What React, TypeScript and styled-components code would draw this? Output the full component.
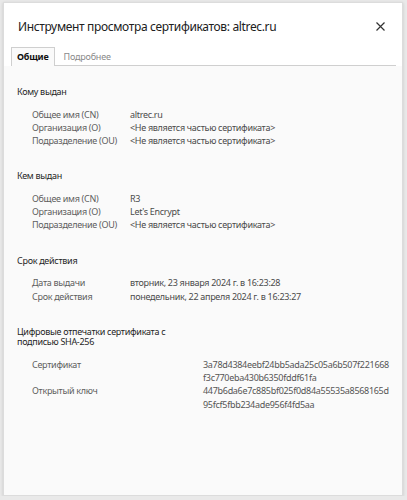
import React from 'react';
import styled, { createGlobalStyle } from 'styled-components';

const GlobalStyle = createGlobalStyle`
  html, body {
    margin: 0;
    padding: 0;
    background: #e9e9e9;
  }
  body {
    font-family: 'Noto Sans', 'Open Sans', sans-serif;
  }
`;

const St = {
  Dialog: styled.div`
    box-sizing: border-box;
    margin: 2px 4px 0 3px;
    height: 494px;
    background: #fafafa;
    border: 1px solid #dcdcdc;
    box-shadow: 0 1px 3px rgba(0, 0, 0, 0.15);
    display: flex;
    flex-direction: column;
  `,
  Header: styled.div`
    background: #fff;
    display: flex;
    align-items: center;
    justify-content: space-between;
    padding: 13px 16px 0 14px;
    height: 20px;
  `,
  Title: styled.div`
    font-size: 12px;
    letter-spacing: -0.35px;
    color: #202020;
  `,
  Close: styled.button`
    border: none;
    background: none;
    padding: 0;
    width: 12px;
    height: 12px;
    display: flex;
    align-items: center;
    justify-content: center;
    cursor: pointer;
  `,
  TabBar: styled.div`
    background: #fff;
    padding: 11px 6px 0 7px;
  `,
  Tabs: styled.div`
    display: flex;
    border-bottom: 1px solid #cfcfcf;
    height: 18px;
  `,
  Tab: styled.div<{ $active?: boolean }>`
    box-sizing: border-box;
    height: 19px;
    padding: 0 5px;
    font-size: 9px;
    letter-spacing: -0.2px;
    line-height: 18px;
    color: ${(p) => (p.$active ? '#111' : '#8a8a8a')};
    font-weight: ${(p) => (p.$active ? 700 : 400)};
    background: ${(p) => (p.$active ? '#fafafa' : 'transparent')};
    border: 1px solid ${(p) => (p.$active ? '#cfcfcf' : 'transparent')};
    border-bottom: none;
    margin-right: 3px;
  `,
  Content: styled.div`
    padding: 21px 14px 0 13px;
  `,
  Section: styled.div`
    margin-bottom: 24px;
  `,
  Heading: styled.div`
    font-size: 9px;
    letter-spacing: -0.3px;
    line-height: 10.5px;
    color: #1f1f1f;
    width: 165px;
    margin-bottom: 10px;
  `,
  Grid: styled.div<{ $col: number }>`
    display: grid;
    grid-template-columns: ${(p) => p.$col}px 1fr;
    padding-left: 15px;
    font-size: 9px;
    letter-spacing: -0.3px;
    line-height: 13.3px;
    color: #555;
  `,
  Label: styled.div`
    color: #5e5e5e;
  `,
  Value: styled.div`
    color: #4a4a4a;
    white-space: nowrap;
  `,
  Hash: styled.div`
    color: #555;
    white-space: nowrap;
  `,
};

const NOT_PART = '<Не является частью сертификата>';

const CloseIcon = () => (
  <svg width="11" height="11" viewBox="0 0 11 11">
    <path d="M1.5 1.5 L9.5 9.5 M9.5 1.5 L1.5 9.5" stroke="#333" strokeWidth="1.2" />
  </svg>
);

const App: React.FC = () => {
  return (
    <>
      <GlobalStyle />
      <St.Dialog>
        <St.Header>
          <St.Title>Инструмент просмотра сертификатов: altrec.ru</St.Title>
          <St.Close aria-label="Закрыть">
            <CloseIcon />
          </St.Close>
        </St.Header>
        <St.TabBar>
          <St.Tabs>
            <St.Tab $active>Общие</St.Tab>
            <St.Tab>Подробнее</St.Tab>
          </St.Tabs>
        </St.TabBar>
        <St.Content>
          <St.Section>
            <St.Heading>Кому выдан</St.Heading>
            <St.Grid $col={98}>
              <St.Label>Общее имя (CN)</St.Label>
              <St.Value>altrec.ru</St.Value>
              <St.Label>Организация (O)</St.Label>
              <St.Value>{NOT_PART}</St.Value>
              <St.Label>Подразделение (OU)</St.Label>
              <St.Value>{NOT_PART}</St.Value>
            </St.Grid>
          </St.Section>
          <St.Section>
            <St.Heading>Кем выдан</St.Heading>
            <St.Grid $col={98}>
              <St.Label>Общее имя (CN)</St.Label>
              <St.Value>R3</St.Value>
              <St.Label>Организация (O)</St.Label>
              <St.Value>Let's Encrypt</St.Value>
              <St.Label>Подразделение (OU)</St.Label>
              <St.Value>{NOT_PART}</St.Value>
            </St.Grid>
          </St.Section>
          <St.Section>
            <St.Heading>Срок действия</St.Heading>
            <St.Grid $col={98}>
              <St.Label>Дата выдачи</St.Label>
              <St.Value>вторник, 23 января 2024 г. в 16:23:28</St.Value>
              <St.Label>Срок действия</St.Label>
              <St.Value>понедельник, 22 апреля 2024 г. в 16:23:27</St.Value>
            </St.Grid>
          </St.Section>
          <St.Section>
            <St.Heading>Цифровые отпечатки сертификата с подписью SHA-256</St.Heading>
            <St.Grid $col={171}>
              <St.Label>Сертификат</St.Label>
              <St.Hash>
                3a78d4384eebf24bb5ada25c05a6b507f221668
                <br />
                f3c770eba430b6350fddf61fa
              </St.Hash>
              <St.Label>Открытый ключ</St.Label>
              <St.Hash>
                447b6da6e7c885bf025f0d84a55535a8568165d
                <br />
                95fcf5fbb234ade956f4fd5aa
              </St.Hash>
            </St.Grid>
          </St.Section>
        </St.Content>
      </St.Dialog>
    </>
  );
};

export default App;
